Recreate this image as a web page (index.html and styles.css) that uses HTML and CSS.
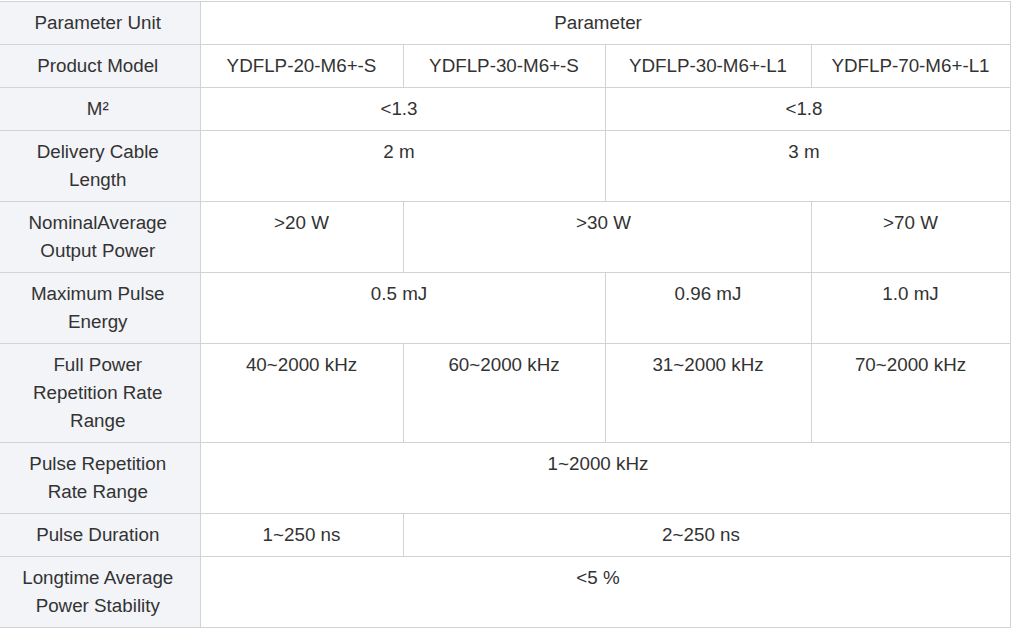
FILE: index.html
```html
<!DOCTYPE html>
<html lang="en">
<head>
<meta charset="utf-8">
<title>Parameters</title>
<link rel="stylesheet" href="styles.css">
</head>
<body>
<table class="spec">
  <colgroup>
    <col class="c-label">
    <col class="c-a">
    <col class="c-b">
    <col class="c-c">
    <col class="c-d">
  </colgroup>
  <tbody>
    <tr>
      <th>Parameter Unit</th>
      <td class="span4" colspan="4">Parameter</td>
    </tr>
    <tr>
      <th>Product Model</th>
      <td>YDFLP-20-M6+-S</td>
      <td>YDFLP-30-M6+-S</td>
      <td>YDFLP-30-M6+-L1</td>
      <td>YDFLP-70-M6+-L1</td>
    </tr>
    <tr>
      <th>M²</th>
      <td class="span2" colspan="2">&lt;1.3</td>
      <td class="span2" colspan="2">&lt;1.8</td>
    </tr>
    <tr>
      <th>Delivery Cable<br>Length</th>
      <td class="span2" colspan="2">2 m</td>
      <td class="span2" colspan="2">3 m</td>
    </tr>
    <tr>
      <th>NominalAverage<br>Output Power</th>
      <td>&gt;20 W</td>
      <td class="span2" colspan="2">&gt;30 W</td>
      <td>&gt;70 W</td>
    </tr>
    <tr>
      <th>Maximum Pulse<br>Energy</th>
      <td class="span2" colspan="2">0.5 mJ</td>
      <td>0.96 mJ</td>
      <td>1.0 mJ</td>
    </tr>
    <tr>
      <th>Full Power<br>Repetition Rate<br>Range</th>
      <td>40~2000 kHz</td>
      <td>60~2000 kHz</td>
      <td>31~2000 kHz</td>
      <td>70~2000 kHz</td>
    </tr>
    <tr>
      <th>Pulse Repetition<br>Rate Range</th>
      <td class="span4" colspan="4">1~2000 kHz</td>
    </tr>
    <tr>
      <th>Pulse Duration</th>
      <td>1~250 ns</td>
      <td class="span3" colspan="3">2~250 ns</td>
    </tr>
    <tr>
      <th>Longtime Average<br>Power Stability</th>
      <td class="span4" colspan="4">&lt;5 %</td>
    </tr>
  </tbody>
</table>
</body>
</html>
```

FILE: styles.css
```css
html, body {
  margin: 0;
  padding: 0;
  background: #ffffff;
}

body {
  font-family: "Liberation Sans", Arial, sans-serif;
  color: #333333;
}

.spec {
  border-collapse: collapse;
  table-layout: fixed;
  width: 1010px;
  margin-top: 1px;
  font-size: 18.8px;
  line-height: 28px;
}

.c-label { width: 200px; }
.c-a { width: 203px; }
.c-b { width: 202px; }
.c-c { width: 206px; }
.c-d { width: 199px; }

.spec th,
.spec td {
  border: 1px solid #d3d3d3;
  padding: 7px 4px;
  text-align: center;
  vertical-align: top;
  font-weight: normal;
}

.spec th {
  background: #f2f4f8;
  border-left: none;
  padding-left: 2px;
  padding-right: 6px;
}

.spec td {
  background: #ffffff;
}

.spec td.span2 { padding-right: 11px; }
.spec td.span3 { padding-right: 15px; }
.spec td.span4 { padding-right: 18px; }
```
